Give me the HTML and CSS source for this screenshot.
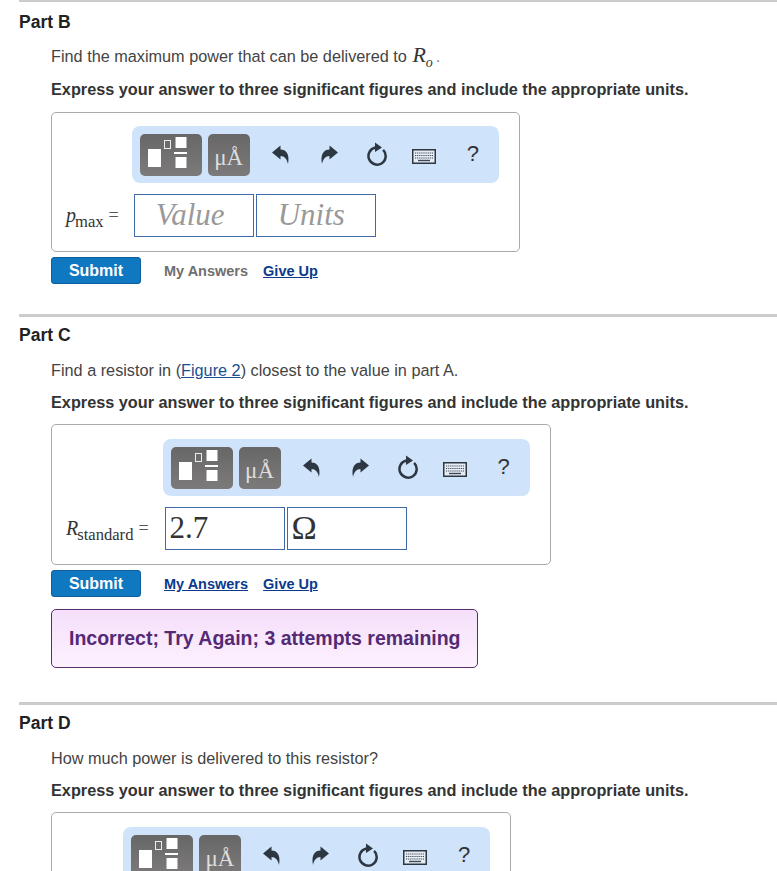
FILE: index.html
```html
<!DOCTYPE html>
<html>
    <head>
        <title>Part B, C, D</title>
        <link rel="stylesheet" href="styles.css">
    </head>
    <body>
        <svg class="icon-defs" width="0" height="0">
            <symbol id="icon-template" viewBox="0 0 62 42">
                <rect x="8" y="15" width="13" height="18" fill="#fff"/>
                <rect x="24.5" y="6.5" width="6" height="8" fill="none" stroke="#eee" stroke-width="1"/>
                <rect x="35.5" y="3" width="11" height="11" fill="#fff"/>
                <rect x="34" y="18" width="13" height="2" fill="#fff"/>
                <rect x="35.5" y="23" width="11" height="11" fill="#fff"/>
            </symbol>
            <symbol id="icon-undo" viewBox="0 0 18 20">
                <path d="M0 7.5 L8.5 0.5 V4.5 C14 4.5 18 9 16 19 C15 14 12.5 11 8.5 11 V14.5 Z" fill="#2d3742"/>
            </symbol>
            <symbol id="icon-reset" viewBox="0 0 22 24">
                <path d="M9.5 5.6 A8.6 8.6 0 1 0 17.1 7.9" fill="none" stroke="#2d3742" stroke-width="2.5"/>
                <path d="M9 0.5 L16 5.5 L9 10 Z" fill="#2d3742"/>
            </symbol>
            <symbol id="icon-keyboard" viewBox="0 0 24 15">
                <rect x="0.75" y="0.75" width="22.5" height="13.5" fill="#e6edf5" stroke="#2d3742" stroke-width="1.5"/>
                <path d="M3 4 H21 M3 6.5 H21 M3 9 H21" stroke="#3d4854" stroke-width="1.2" stroke-dasharray="1.2 0.9"/>
                <path d="M6 11.5 H18" stroke="#3d4854" stroke-width="1.4"/>
            </symbol>
        </svg>

        <section class="part part-first">
            <h2 class="part-title">Part B</h2>
            <div class="part-body">
                <p class="prompt">Find the maximum power that can be delivered to <span class="math-inline"><i>R</i><sub><i>o</i></sub></span><span class="dot">.</span></p>
                <p class="instruction">Express your answer to three significant figures and include the appropriate units.</p>
                <div class="answer-box">
                    <div class="answer-label"><i>p</i><sub>max</sub> <span class="equals">=</span></div>
                    <div class="answer-main">
                        <div class="toolbar">
                            <span class="tool-btn tool-btn-wide"><svg width="62" height="42"><use href="#icon-template"/></svg></span>
                            <span class="tool-btn tool-btn-units">μÅ</span>
                            <svg class="tool-undo" width="18" height="20"><use href="#icon-undo"/></svg>
                            <svg class="tool-redo" width="18" height="20"><use href="#icon-undo"/></svg>
                            <svg class="tool-reset" width="22" height="24"><use href="#icon-reset"/></svg>
                            <svg class="tool-keyboard" width="24" height="15"><use href="#icon-keyboard"/></svg>
                            <span class="tool-help">?</span>
                        </div>
                        <div class="inputs">
                            <div class="math-input placeholder">Value</div>
                            <div class="math-input placeholder">Units</div>
                        </div>
                    </div>
                </div>
                <div class="actions">
                    <button class="submit">Submit</button>
                    <span class="action-link disabled">My Answers</span>
                    <a class="action-link" href="#">Give Up</a>
                </div>
            </div>
        </section>

        <section class="part part-middle">
            <h2 class="part-title">Part C</h2>
            <div class="part-body">
                <p class="prompt">Find a resistor in (<a class="figure-link" href="#">Figure 2</a>) closest to the value in part A.</p>
                <p class="instruction">Express your answer to three significant figures and include the appropriate units.</p>
                <div class="answer-box">
                    <div class="answer-label"><i>R</i><sub>standard</sub> <span class="equals">=</span></div>
                    <div class="answer-main">
                        <div class="toolbar">
                            <span class="tool-btn tool-btn-wide"><svg width="62" height="42"><use href="#icon-template"/></svg></span>
                            <span class="tool-btn tool-btn-units">μÅ</span>
                            <svg class="tool-undo" width="18" height="20"><use href="#icon-undo"/></svg>
                            <svg class="tool-redo" width="18" height="20"><use href="#icon-undo"/></svg>
                            <svg class="tool-reset" width="22" height="24"><use href="#icon-reset"/></svg>
                            <svg class="tool-keyboard" width="24" height="15"><use href="#icon-keyboard"/></svg>
                            <span class="tool-help">?</span>
                        </div>
                        <div class="inputs">
                            <div class="math-input math-filled">2.7</div>
                            <div class="math-input math-filled"><span class="unit-symbol">Ω</span></div>
                        </div>
                    </div>
                </div>
                <div class="actions">
                    <button class="submit">Submit</button>
                    <a class="action-link" href="#">My Answers</a>
                    <a class="action-link" href="#">Give Up</a>
                </div>
                <div class="feedback">Incorrect; Try Again; 3 attempts remaining</div>
            </div>
        </section>

        <section class="part">
            <h2 class="part-title">Part D</h2>
            <div class="part-body">
                <p class="prompt">How much power is delivered to this resistor?</p>
                <p class="instruction">Express your answer to three significant figures and include the appropriate units.</p>
                <div class="answer-box">
                    <div class="answer-label-space"></div>
                    <div class="answer-main">
                        <div class="toolbar">
                            <span class="tool-btn tool-btn-wide"><svg width="62" height="42"><use href="#icon-template"/></svg></span>
                            <span class="tool-btn tool-btn-units">μÅ</span>
                            <svg class="tool-undo" width="18" height="20"><use href="#icon-undo"/></svg>
                            <svg class="tool-redo" width="18" height="20"><use href="#icon-undo"/></svg>
                            <svg class="tool-reset" width="22" height="24"><use href="#icon-reset"/></svg>
                            <svg class="tool-keyboard" width="24" height="15"><use href="#icon-keyboard"/></svg>
                            <span class="tool-help">?</span>
                        </div>
                    </div>
                </div>
            </div>
        </section>
    </body>
</html>
```

FILE: styles.css
```css
html,
body {
    height: 871px;
    overflow: hidden;
}

body {
    font-family: "Liberation Sans", Arial, sans-serif;
    font-size: 16.25px;
    color: #444;
    background-color: #fff;
    margin: 0;
    padding: 0;
}

.icon-defs {
    position: absolute;
}

.part {
    margin-left: 19px;
    border-top: 3px solid #ccc;
}

.part-first {
    border-top-width: 2px;
    height: 312px;
}

.part-middle {
    height: 385px;
}

.part-title {
    margin: 0;
    padding-top: 9px;
    font-size: 17.5px;
    line-height: 18px;
    color: #222;
}

.part-first .part-title {
    padding-top: 11px;
}

.part-body {
    padding-left: 32px;
}

.prompt {
    margin: 16px 0 0 0;
    line-height: 20px;
}

.part-first .prompt {
    margin-top: 15px;
    height: 21px;
}

.instruction {
    margin: 12px 0 0 0;
    line-height: 20px;
    font-weight: bold;
    color: #333;
}

.math-inline {
    font-family: "Liberation Serif", serif;
    font-size: 22px;
    line-height: 0;
    color: #333;
    margin-left: 1px;
}

.math-inline sub {
    font-size: 14px;
    line-height: 0;
}

.dot {
    color: #888;
    margin-left: 3px;
}

/* answer box */
.answer-box {
    display: inline-flex;
    align-items: flex-end;
    margin-top: 12px;
    padding: 14px 20px 14px 13px;
    border: 1px solid #aaa;
    border-radius: 5px;
    vertical-align: top;
}

.part-first .answer-box {
    margin-top: 13px;
    padding-top: 13px;
}

.answer-label {
    font-family: "Liberation Serif", serif;
    font-size: 20px;
    line-height: 22px;
    color: #333;
    white-space: nowrap;
    padding-left: 1px;
    padding-bottom: 11px;
    margin-right: 14px;
}

.part-first .answer-label {
    margin-right: 13px;
}

.answer-label sub {
    font-size: 16.6px;
    line-height: 0;
    margin-left: -1px;
}

.answer-label-space {
    width: 44px;
    margin-right: 14px;
}

.equals {
    font-size: 18px;
    vertical-align: 1px;
    color: #555;
}

.toolbar {
    display: flex;
    align-items: center;
    width: 367px;
    height: 57px;
    background-color: #cfe3fb;
    border-radius: 8px;
    box-sizing: border-box;
    padding-left: 8px;
}

.tool-btn {
    display: block;
    height: 42px;
    border-radius: 5px;
    background: linear-gradient(#686768, #7c7a7a);
}

.tool-btn svg {
    display: block;
}

.tool-btn-wide {
    width: 62px;
}

.tool-btn-units {
    width: 42px;
    margin-left: 6px;
    font-family: "Liberation Serif", serif;
    font-size: 23px;
    line-height: 48px;
    text-align: center;
    color: #dedede;
}

.tool-undo {
    margin-left: 22px;
}

.tool-redo {
    margin-left: 30px;
    transform: scaleX(-1);
}

.tool-reset {
    margin-left: 28px;
    margin-bottom: 2px;
}

.tool-keyboard {
    margin-left: 24px;
    margin-top: 4px;
}

.tool-help {
    margin-left: 31px;
    font-size: 22px;
    color: #333;
    margin-top: -1px;
}

.inputs {
    display: flex;
    gap: 2px;
    margin-top: 11px;
    margin-left: 2px;
}

.math-input {
    width: 120px;
    height: 43px;
    box-sizing: border-box;
    border: 1px solid #3f6aa5;
    font-family: "Liberation Serif", serif;
    font-size: 31px;
    line-height: 40px;
    color: #333;
}

.math-filled {
    padding-left: 4px;
}

.unit-symbol {
    font-size: 34px;
}

.placeholder {
    padding-left: 21px;
    font-style: italic;
    color: #999;
}

/* submit row */
.actions {
    display: flex;
    align-items: center;
    margin-top: 5px;
    height: 27px;
}

.submit {
    width: 90px;
    height: 27px;
    padding: 0;
    background-color: #1077c1;
    border: 1px solid #0e5f9c;
    border-radius: 3px;
    font-family: "Liberation Sans", Arial, sans-serif;
    font-size: 16px;
    font-weight: bold;
    color: #fff;
}

.action-link {
    margin-left: 15px;
    margin-top: 1px;
    font-size: 14.5px;
    font-weight: bold;
    color: #0b3a8c;
}

.submit + .action-link {
    margin-left: 23px;
}

.disabled {
    color: #6f6f6f;
}

.figure-link {
    color: #1b4f8f;
}

.feedback {
    width: 427px;
    height: 59px;
    margin-top: 12px;
    box-sizing: border-box;
    padding-left: 17px;
    background: linear-gradient(#f5dffb, #fdf1fe);
    border: 1px solid #5a2d6f;
    border-radius: 5px;
    font-size: 19.5px;
    font-weight: bold;
    line-height: 57px;
    color: #542a75;
    white-space: nowrap;
}
```
